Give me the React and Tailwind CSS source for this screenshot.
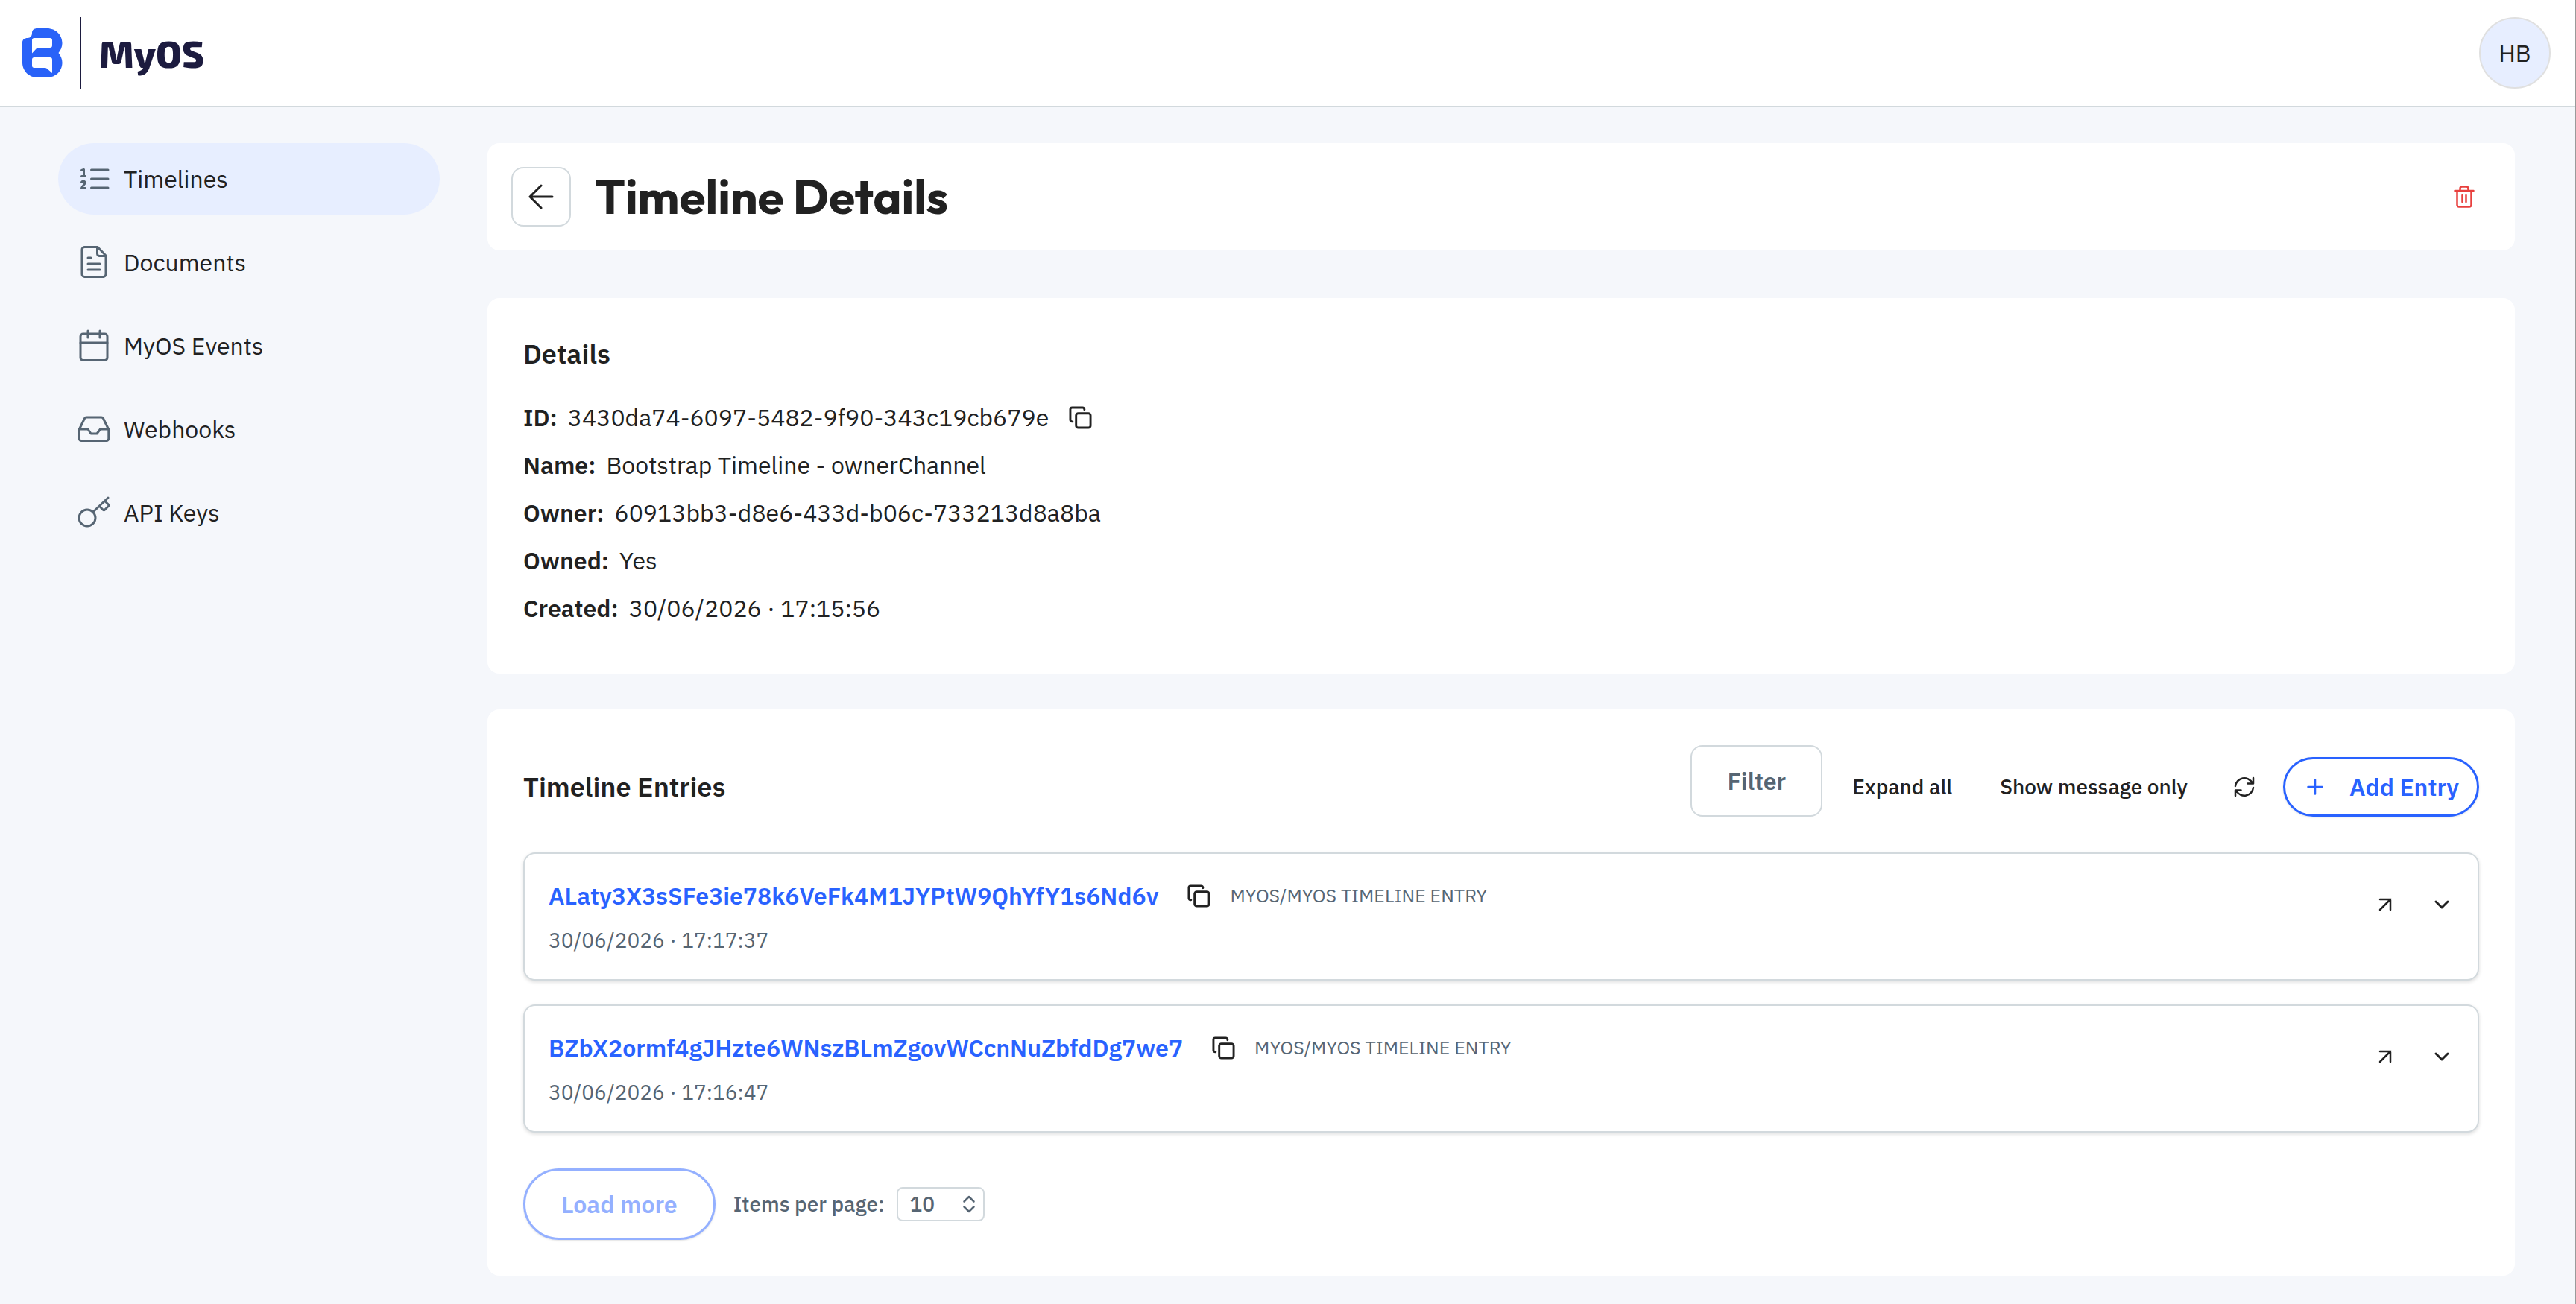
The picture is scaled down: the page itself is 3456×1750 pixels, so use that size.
import React, { useState } from "react";

const NAV_ITEMS = [
  { label: "Timelines",   href: "#timelines", Icon: NumberedListIcon, active: true },
  { label: "Documents",   href: "#documents", Icon: DocumentIcon },
  { label: "MyOS Events", href: "#events",    Icon: CalendarIcon },
  { label: "Webhooks",    href: "#webhooks",  Icon: InboxIcon },
  { label: "API Keys",    href: "#api-keys",  Icon: KeyIcon },
];

const DETAILS = [
  { label: "ID:",      value: "3430da74-6097-5482-9f90-343c19cb679e", copy: true },
  { label: "Name:",    value: "Bootstrap Timeline - ownerChannel" },
  { label: "Owner:",   value: "60913bb3-d8e6-433d-b06c-733213d8a8ba" },
  { label: "Owned:",   value: "Yes" },
  { label: "Created:", value: "30/06/2026 · 17:15:56" },
];

const ENTRIES = [
  { id: "ALaty3X3sSFe3ie78k6VeFk4M1JYPtW9QhYfY1s6Nd6v", type: "MYOS/MYOS TIMELINE ENTRY", date: "30/06/2026 · 17:17:37" },
  { id: "BZbX2ormf4gJHzte6WNszBLmZgovWCcnNuZbfdDg7we7", type: "MYOS/MYOS TIMELINE ENTRY", date: "30/06/2026 · 17:16:47" },
];

export default function App() {
  const [perPage, setPerPage] = useState("10");

  return (
    <div className="min-h-screen bg-[#f5f7fb] border-r-2 border-[#9a9a9a] font-['IBM_Plex_Sans','Roboto',sans-serif] text-[32px] text-[#212121]">
      <header className="flex items-center justify-between h-36 pl-[30px] pr-8 bg-white border-b-2 border-[#d2d9dd]">
        <a href="#home" className="flex items-center">
          <Logo />
          <span className="w-px h-24 mx-6 bg-[#1c1b3f]" />
          <span className="font-['Exo_2','Inter',sans-serif] font-extrabold text-[50px] leading-[64px] text-[#1c1b3f]">MyOS</span>
        </a>
        <button className="size-24 rounded-full border-2 border-[#e0e0e0] bg-[#e7eeff]">HB</button>
      </header>

      <div className="flex gap-16 pt-12 pl-[78px] pr-20 pb-9">
        <nav className="w-[512px] shrink-0 flex flex-col gap-4">
          {NAV_ITEMS.map(({ label, href, Icon, active }) => (
            <a key={label} href={href}
              className={`flex items-center gap-4 h-24 px-6 rounded-full ${active ? "bg-[#e7eeff]" : ""}`}>
              <Icon />
              {label}
            </a>
          ))}
        </nav>

        <main className="flex-1 min-w-0">
          {/* Title bar */}
          <div className="flex items-center gap-8 p-8 mb-16 rounded-2xl bg-white">
            <button aria-label="Back"
              className="flex items-center justify-center size-20 rounded-2xl border-2 border-[#d2d9dd]">
              <BackIcon />
            </button>
            <h1 className="flex-1 font-['Gilroy','Outfit','Figtree','Lato',sans-serif] font-bold text-[64px] leading-[78px]">Timeline Details</h1>
            <button aria-label="Delete timeline" className="flex items-center justify-center size-18 text-[#e8403e]">
              <TrashIcon />
            </button>
          </div>

          {/* Details */}
          <section className="px-12 pt-12 pb-14 mb-12 rounded-2xl bg-white">
            <h2 className="mb-[26px] font-semibold text-4xl leading-[54px]">Details</h2>
            <dl>
              {DETAILS.map(({ label, value, copy }) => (
                <div key={label} className="flex items-center gap-3.5 h-16">
                  <dt className="font-semibold">{label}</dt>
                  <dd className="flex items-center gap-6">
                    {value}
                    {copy && <CopyButton />}
                  </dd>
                </div>
              ))}
            </dl>
          </section>

          {/* Entries */}
          <section className="p-12 rounded-2xl bg-white">
            <div className="flex items-end justify-between mb-12">
              <h2 className="font-semibold text-4xl leading-[80px]">Timeline Entries</h2>
              <div className="flex items-end">
                <button className="h-24 px-[47px] mr-10 rounded-2xl border-2 border-[#d2d9dd] font-semibold text-[#566573]">
                  Filter
                </button>
                <button className="h-20 mr-16 font-medium text-[28px]">Expand all</button>
                <button className="h-20 mr-14 font-medium text-[28px]">Show message only</button>
                <button aria-label="Refresh" className="flex items-center justify-center h-20 w-10 mr-8">
                  <RefreshIcon />
                </button>
                <button className="flex items-center gap-7.5 h-20 px-6 rounded-full border-3 border-[#2962ff] shadow-sm font-semibold text-[#2962ff]">
                  <PlusIcon />
                  Add Entry
                </button>
              </div>
            </div>

            <ul className="flex flex-col gap-8">
              {ENTRIES.map((entry) => (
                <EntryCard key={entry.id} entry={entry} />
              ))}
            </ul>

            <div className="flex items-center mt-12">
              <button disabled
                className="h-24 px-12 mr-6 rounded-full border-3 border-[#94b0ff] shadow-sm font-semibold text-[#94b0ff]">
                Load more
              </button>
              <label htmlFor="per-page" className="mr-4 font-medium text-[28px] text-[#566573]">Items per page:</label>
              <div className="relative text-[#566573]">
                <select id="per-page" value={perPage} onChange={(e) => setPerPage(e.target.value)}
                  className="block w-[118px] h-[46px] pl-4 appearance-none rounded-lg border-2 border-[#d2d9dd] bg-white font-medium text-[28px] leading-none">
                  <option>10</option>
                  <option>25</option>
                  <option>50</option>
                </select>
                <span className="absolute right-3 inset-y-0 flex items-center pointer-events-none">
                  <SortIcon />
                </span>
              </div>
            </div>
          </section>
        </main>
      </div>
    </div>
  );
}

function EntryCard({ entry }) {
  return (
    <li className="flex items-start justify-between h-[172px] pl-8 pr-7 pt-8 rounded-2xl border-2 border-[#d2d9dd] bg-white shadow-[0_2px_5px_rgba(0,0,0,0.14)]">
      <div>
        <div className="flex items-center h-12">
          <a href={`#${entry.id}`} className="mr-9 font-semibold text-[#2962ff]">{entry.id}</a>
          <CopyButton />
          <span className="ml-6 text-[25px] text-[#566573]">{entry.type}</span>
        </div>
        <p className="mt-3 text-[28px] leading-12 text-[#566573]">{entry.date}</p>
      </div>
      <div className="flex items-center gap-9 h-18">
        <button aria-label="Open entry" className="flex items-center justify-center size-10"><ArrowUpRightIcon /></button>
        <button aria-label="Expand entry" className="flex items-center justify-center size-10"><ChevronIcon /></button>
      </div>
    </li>
  );
}

function CopyButton() {
  return (
    <button aria-label="Copy" className="flex items-center justify-center w-9 h-10">
      <svg width="31" height="31" viewBox="0 0 32 32" fill="none" stroke="currentColor" strokeWidth="3" strokeLinecap="round" strokeLinejoin="round">
        <rect x="10" y="10" width="20" height="20" rx="3" />
        <path d="M5 21.500h-.5a2.500 2.500 0 0 1-2.500-2.500V4.500A2.500 2.500 0 0 1 4.500 2H19a2.500 2.500 0 0 1 2.500 2.500V5" />
      </svg>
    </button>
  );
}

/* Icons */

function Logo() {
  return (
    <svg width="54" height="66" viewBox="0 0 54 66" fill="#2962f8">
      <path fillRule="evenodd" d="M20 0H33C45 0 53.500 9 53.500 20C53.500 25 51.500 29 48.500 33C51.500 37 53.500 41 53.500 46C53.500 57 45 66 33 66H20C9 66 0 57 0 46V19C0 15 3 13 7 13C11 13 13 10 13 6C13 2 16 0 20 0ZM16 13Q13 13 13 16V33.500L19 27Q20 26 22 26H37Q40 26 40 23V16Q40 13 37 13ZM16 39Q13 39 13 42V50Q13 53 16 53H30Q32 53 33 54L40 60V42Q40 39 37 39Z" />
    </svg>
  );
}

function NavSvg({ children }) {
  return (
    <svg className="shrink-0 text-[#566573]" width="48" height="48" viewBox="0 0 48 48" fill="none" stroke="currentColor" strokeWidth="3" strokeLinecap="round" strokeLinejoin="round">
      {children}
    </svg>
  );
}

function NumberedListIcon() {
  return (
    <NavSvg>
      <path d="M20.500 12h22.500M20.500 24h22.500M20.500 36h22.500" />
      <path d="M7.500 12.500l3-1v9M7.500 20.500h5M7.500 28.500c1-2 5-1.500 4.500 1.200-.3 1.800-3.500 3.500-4.500 6.800h5" />
    </NavSvg>
  );
}

function DocumentIcon() {
  return (
    <NavSvg>
      <path d="M11.500 3.500h17.500L40 15v25a3.500 3.500 0 0 1-3.500 3.500h-25A3.500 3.500 0 0 1 8 40V7A3.500 3.500 0 0 1 11.500 3.500z" />
      <path d="M28.500 3.500V12.500a3 3 0 0 0 3 3h8.500M16 18h4M16 26h16M16 34h16" />
    </NavSvg>
  );
}

function CalendarIcon() {
  return (
    <NavSvg>
      <rect x="6" y="8" width="36" height="35.500" rx="3.500" />
      <path d="M6 20h36M16 4v9M32 4v9" />
    </NavSvg>
  );
}

function InboxIcon() {
  return (
    <NavSvg>
      <path d="M4.200 24.500L11.500 9.500a3 3 0 0 1 2.500-1.500h20a3 3 0 0 1 2.500 1.500l7.300 15V36.500a3 3 0 0 1-3 3h-33.600a3 3 0 0 1-3-3z" />
      <path d="M4.200 24H16l4 6h8l4.500-6h11.300" />
    </NavSvg>
  );
}

function KeyIcon() {
  return (
    <NavSvg>
      <circle cx="15" cy="31" r="11" />
      <path d="M23 23L43 4M38.500 8.500l5 4.500a1.500 1.500 0 0 1 0 2.200l-5 5a1.500 1.500 0 0 1-2.200 0l-4.800-4.700" />
    </NavSvg>
  );
}

function BackIcon() {
  return (
    <svg width="34" height="34" viewBox="0 0 34 34" fill="none" stroke="currentColor" strokeWidth="3" strokeLinecap="round" strokeLinejoin="round">
      <path d="M32 17H2M17 2L2 17l15 15" />
    </svg>
  );
}

function TrashIcon() {
  return (
    <svg width="28" height="30" viewBox="0 0 28 30" fill="none" stroke="currentColor" strokeWidth="2.500" strokeLinecap="round" strokeLinejoin="round">
      <path d="M1.500 7h25M4.500 7v19a2.500 2.500 0 0 0 2.500 2.500h14a2.500 2.500 0 0 0 2.500-2.500V7M8.500 7V4A2.500 2.500 0 0 1 11 1.500h6A2.500 2.500 0 0 1 19.500 4v3M11.500 13v9M16.500 13v9" />
    </svg>
  );
}

function RefreshIcon() {
  return (
    <svg width="28" height="28" viewBox="0 0 28 28" fill="none" stroke="currentColor" strokeWidth="2.500" strokeLinecap="round" strokeLinejoin="round">
      <path d="M2 13A12 12 0 0 1 24.500 8.500M26 2v7.500h-7.500M26 15A12 12 0 0 1 3.500 19.500M2 26v-7.500h7.500" />
    </svg>
  );
}

function PlusIcon() {
  return (
    <svg width="32" height="32" viewBox="0 0 32 32" fill="none" stroke="currentColor" strokeWidth="2.500" strokeLinecap="round">
      <path d="M16 6.500v19M6.500 16h19" />
    </svg>
  );
}

function ArrowUpRightIcon() {
  return (
    <svg width="20" height="20" viewBox="0 0 20 20" fill="none" stroke="currentColor" strokeWidth="2.500" strokeLinecap="round">
      <path d="M3 17L17 3M3 3h14v14" />
    </svg>
  );
}

function ChevronIcon() {
  return (
    <svg width="22" height="14" viewBox="0 0 22 14" fill="none" stroke="currentColor" strokeWidth="3" strokeLinecap="round" strokeLinejoin="round">
      <path d="M3 3l8 8 8-8" />
    </svg>
  );
}

function SortIcon() {
  return (
    <svg width="18" height="24" viewBox="0 0 18 24" fill="none" stroke="currentColor" strokeWidth="2.500" strokeLinecap="round" strokeLinejoin="round">
      <path d="M2.500 8.500L9 2l6.500 6.500M2.500 15.500L9 22l6.500-6.500" />
    </svg>
  );
}
